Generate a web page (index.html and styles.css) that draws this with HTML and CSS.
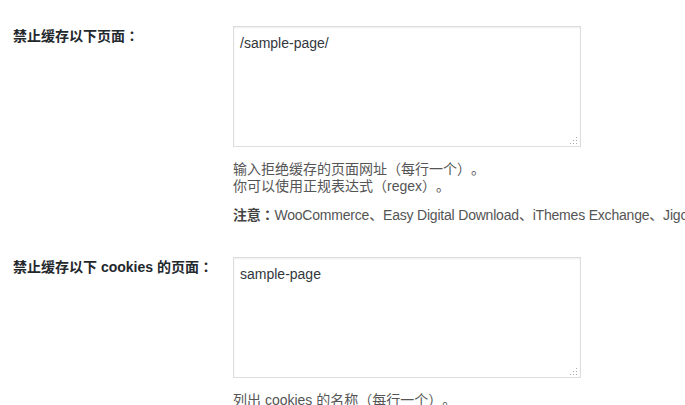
FILE: index.html
```html
<!DOCTYPE html>
<html lang="zh-CN">
<head>
<meta charset="utf-8">
<title>缓存设置</title>
<link rel="stylesheet" href="styles.css">
</head>
<body>
<div class="form">
  <div class="row row-first">
    <div class="label">禁止缓存以下页面<span class="colon" lang="zh-Hant">：</span></div>
    <div class="field">
      <div class="box-wrap">
        <textarea class="box">/sample-page/</textarea>
        <svg class="grip" width="9" height="9" viewBox="0 0 9 9" aria-hidden="true">
          <rect x="7" y="1" width="1" height="1"/>
          <rect x="4" y="4" width="1" height="1"/>
          <rect x="7" y="4" width="1" height="1"/>
          <rect x="1" y="7" width="1" height="1"/>
          <rect x="4" y="7" width="1" height="1"/>
          <rect x="7" y="7" width="1" height="1"/>
        </svg>
      </div>
      <div class="desc">
        <p class="lines">输入拒绝缓存的页面网址（每行一个）。<br>你可以使用正规表达式（regex）。</p>
        <p class="note"><strong>注意<span class="colon" lang="zh-Hant">：</span></strong>WooCommerce、Easy Digital Download、iThemes Exchange、Jigoshop、WP-Shop 的购物车、结账及我的账户页面都会自动禁止缓存。</p>
      </div>
    </div>
  </div>
  <div class="row">
    <div class="label">禁止缓存以下 cookies 的页面<span class="colon" lang="zh-Hant">：</span></div>
    <div class="field">
      <div class="box-wrap">
        <textarea class="box">sample-page</textarea>
        <svg class="grip" width="9" height="9" viewBox="0 0 9 9" aria-hidden="true">
          <rect x="7" y="1" width="1" height="1"/>
          <rect x="4" y="4" width="1" height="1"/>
          <rect x="7" y="4" width="1" height="1"/>
          <rect x="1" y="7" width="1" height="1"/>
          <rect x="4" y="7" width="1" height="1"/>
          <rect x="7" y="7" width="1" height="1"/>
        </svg>
      </div>
      <div class="desc">
        <p class="lines">列出 cookies 的名称（每行一个）。</p>
      </div>
    </div>
  </div>
</div>
</body>
</html>
```
FILE: styles.css
```css
html, body {
  margin: 0;
  padding: 0;
  background: #fff;
  overflow: hidden;
}
body {
  font-family: "Liberation Sans", "Noto Sans CJK SC", sans-serif;
  font-size: 14px;
  color: #444;
  text-spacing-trim: space-all;
}
.form {
  padding: 26px 0 0 13px;
}
.row {
  display: flex;
  align-items: flex-start;
}
.row-first {
  margin-bottom: 33px;
}
.label {
  width: 220px;
  flex: none;
  font-weight: bold;
  color: #23282d;
  line-height: 18px;
}
.colon {
  font-family: "Noto Sans CJK TC", sans-serif;
}
.field {
  flex: none;
}
.box-wrap {
  position: relative;
  width: 348px;
}
.box {
  display: block;
  box-sizing: border-box;
  width: 348px;
  height: 121px;
  margin: 0;
  padding: 6px;
  border: 1px solid #ddd;
  box-shadow: inset 0 1px 2px rgba(0, 0, 0, 0.07);
  font-family: "Liberation Sans", "Noto Sans CJK SC", sans-serif;
  font-size: 14px;
  line-height: 20px;
  color: #32373c;
  background: #fff;
  resize: none;
  outline: none;
}
.grip {
  position: absolute;
  right: 3px;
  bottom: 2px;
  fill: #a8a8a8;
}
.desc {
  margin-top: 14px;
  line-height: 17px;
  color: #555;
}
.desc p {
  margin: 0;
  white-space: nowrap;
}
.note {
  margin-top: 11px !important;
  letter-spacing: -0.2px;
}
.note strong {
  color: #444;
}
```
